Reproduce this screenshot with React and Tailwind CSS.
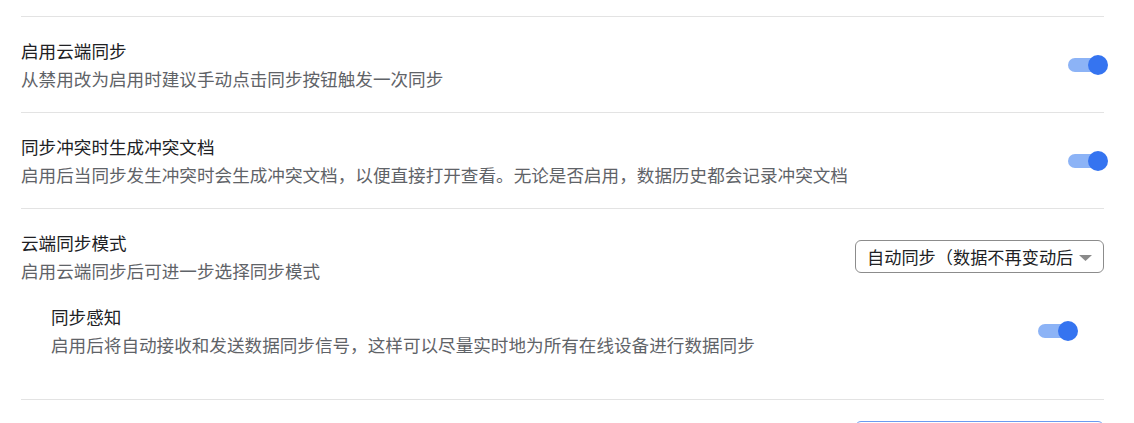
import React from "react";

function Toggle() {
  return (
    <div className="relative w-[36px] h-5 shrink-0">
      <div className="absolute left-0 top-[3px] w-[34px] h-[14px] rounded-full bg-[#8cb3f6]"></div>
      <div className="absolute left-[20px] top-0 w-5 h-5 rounded-full bg-[#3574f0]"></div>
    </div>
  );
}

function Label({ title, desc }) {
  return (
    <div className="flex-1 min-w-0">
      <div className="text-[#202124]">{title}</div>
      <div className="text-[#5f6368]">{desc}</div>
    </div>
  );
}

export default function App() {
  return (
    <div
      className="w-[1134px] h-[423px] overflow-hidden bg-white text-[17.6px] leading-[27.5px]"
      style={{ fontFamily: '"Noto Sans CJK SC", "Noto Sans", sans-serif' }}
    >
      <div className="ml-[21px] mr-[30px] pt-4">
        <div className="border-t border-[#e3e3e3] py-5 flex items-center gap-4">
          <Label
            title="启用云端同步"
            desc="从禁用改为启用时建议手动点击同步按钮触发一次同步"
          />
          <Toggle />
        </div>

        <div className="border-t border-[#e3e3e3] py-5 flex items-center gap-4">
          <Label
            title="同步冲突时生成冲突文档"
            desc="启用后当同步发生冲突时会生成冲突文档，以便直接打开查看。无论是否启用，数据历史都会记录冲突文档"
          />
          <Toggle />
        </div>

        <div className="border-t border-[#e3e3e3] py-5">
          <div className="flex items-center gap-4">
            <Label title="云端同步模式" desc="启用云端同步后可进一步选择同步模式" />
            <div className="relative w-[249px] h-[33px] shrink-0 rounded-[6px] border border-[#8c8c8c] bg-white flex items-center pl-[11px] pr-[30px] overflow-hidden text-[17.2px]">
              <span className="whitespace-nowrap overflow-hidden text-[#202124]">
                自动同步（数据不再变动后同步）
              </span>
              <svg
                className="absolute right-[11px] top-[14px]"
                width="13"
                height="6"
                viewBox="0 0 13 6"
              >
                <path d="M0 0 L13 0 L6.5 6 Z" fill="#8a8a8a" />
              </svg>
            </div>
          </div>
          <div className="px-[30px] pt-[19px] pb-[21px] flex items-center gap-4">
            <Label
              title="同步感知"
              desc="启用后将自动接收和发送数据同步信号，这样可以尽量实时地为所有在线设备进行数据同步"
            />
            <Toggle />
          </div>
        </div>

        <div className="border-t border-[#e3e3e3] pt-5 flex items-start justify-end">
          <div className="w-[249px] h-[33px] mt-px rounded-[6px] border border-[#6b9bf0] bg-white"></div>
        </div>
      </div>
    </div>
  );
}
